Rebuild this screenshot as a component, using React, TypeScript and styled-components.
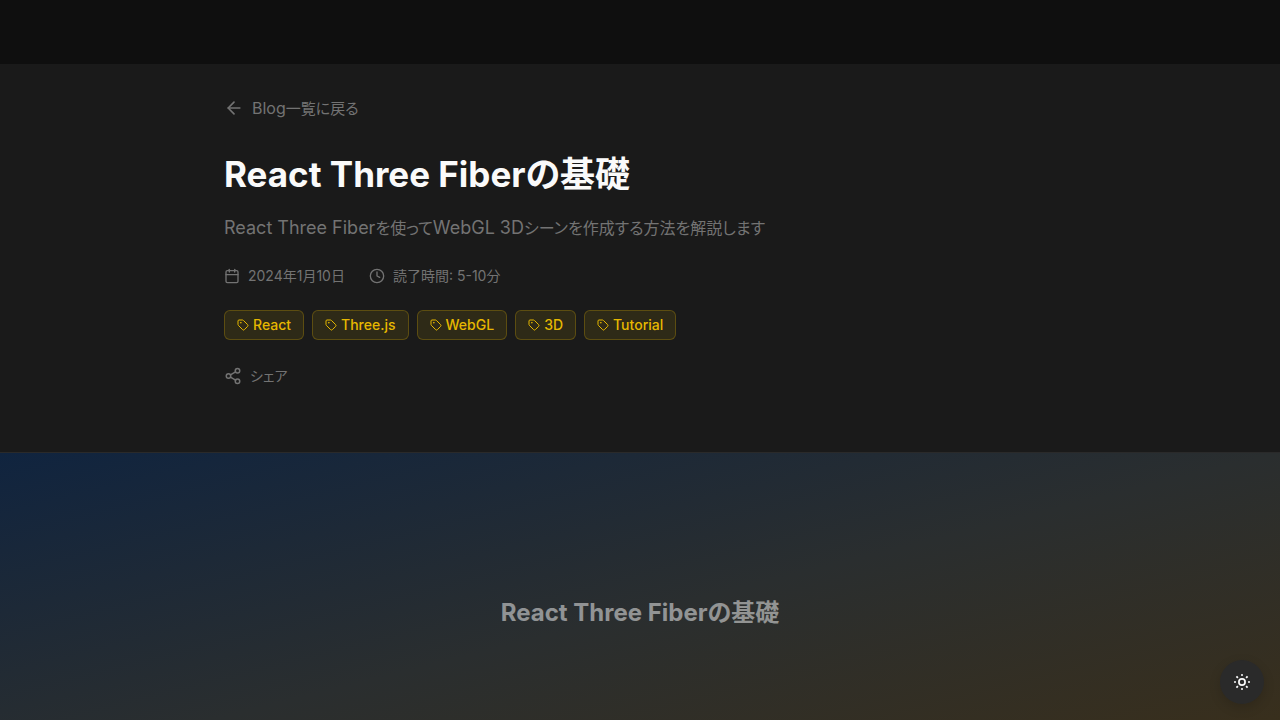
import React from 'react';
import styled, { createGlobalStyle } from 'styled-components';
import { ArrowLeft, Calendar, Clock, Share2, Tag } from 'lucide-react';

const GlobalStyle = createGlobalStyle`
  *, *::before, *::after { box-sizing: border-box; }
  body {
    margin: 0;
    background: #0f0f0f;
    color: #fafafa;
    font-family: Inter, "Noto Sans CJK JP", sans-serif;
    font-size: 16px;
    line-height: 24px;
    font-feature-settings: "palt";
  }
  h1, p, ul { margin: 0; padding: 0; }
  button { font: inherit; font-feature-settings: inherit; border: 0; padding: 0; cursor: pointer; }
`;

const Page = styled.div`
  padding-top: 64px;
`;

const ArticleHeader = styled.header`
  background: #1a1a1a;
  border-bottom: 1px solid #2a2a2a;
`;

const Container = styled.div`
  max-width: 896px;
  margin: 0 auto;
  padding: 32px 32px 64px;
  display: flex;
  flex-direction: column;
  align-items: flex-start;
`;

const BackLink = styled.a`
  display: inline-flex;
  align-items: center;
  gap: 8px;
  margin-bottom: 32px;
  color: #737373;
  text-decoration: none;
`;

const Japanese = styled.span<{ $size: number }>`
  font-size: ${({ $size }) => $size}px;
  line-height: 1;
`;

const Title = styled.h1`
  margin-bottom: 16px;
  font-size: 35px;
  line-height: 45px;
  font-weight: 700;
`;

const Description = styled.p`
  margin-bottom: 24px;
  color: #737373;
  font-size: 18px;
  line-height: 29px;
`;

const MetaRow = styled.div`
  display: flex;
  flex-wrap: wrap;
  gap: 24px;
  margin-bottom: 24px;
  color: #737373;
  font-size: 14px;
  line-height: 20px;
`;

const MetaItem = styled.span`
  display: flex;
  align-items: center;
  gap: 8px;
`;

const TagList = styled.ul`
  display: flex;
  flex-wrap: wrap;
  gap: 8px;
  margin-bottom: 24px;
  list-style: none;
`;

const TagChip = styled.li`
  display: flex;
  align-items: center;
  gap: 4px;
  padding: 4px 12px;
  border: 1px solid rgba(230, 184, 0, 0.25);
  border-radius: 6px;
  background: rgba(230, 184, 0, 0.1);
  color: #e6b800;
  font-size: 14px;
  line-height: 20px;
  font-weight: 500;
`;

const ShareButton = styled.button`
  display: flex;
  align-items: center;
  gap: 8px;
  height: 24px;
  background: none;
  color: #737373;
`;

const Hero = styled.div`
  display: flex;
  align-items: center;
  justify-content: center;
  height: 320px;
  background: linear-gradient(to bottom right, #10243f, #2a2e2f, #3b2f19);
`;

const HeroText = styled.span`
  color: rgba(250, 250, 250, 0.5);
  font-size: 24px;
  line-height: 32px;
  font-weight: 700;
`;

const ThemeButton = styled.button`
  position: fixed;
  right: 16px;
  bottom: 16px;
  width: 44px;
  height: 44px;
  display: flex;
  align-items: center;
  justify-content: center;
  border-radius: 50%;
  background: #2a2a2a;
  color: #fafafa;
  box-shadow: 0 4px 12px rgba(0, 0, 0, 0.15);
`;

const tags = ['React', 'Three.js', 'WebGL', '3D', 'Tutorial'];

function SunIcon() {
  return (
    <svg width="18" height="18" viewBox="0 0 18 18" fill="none" stroke="currentColor" aria-hidden="true">
      <circle cx="9" cy="9" r="3.1" strokeWidth="1.7" />
      <path d="M9 1v2M9 15v2M1 9h2M15 9h2" strokeWidth="1.5" />
      <path d="M3.4 3.4l1.5 1.5M13.1 13.1l1.5 1.5M3.4 14.6l1.5-1.5M13.1 4.9l1.5-1.5" strokeWidth="1.8" />
    </svg>
  );
}

export default function App() {
  return (
    <Page lang="ja">
      <GlobalStyle />
      <main>
        <ArticleHeader>
          <Container>
            <BackLink href="#blog">
              <ArrowLeft size={20} />
              <span>
                Blog<Japanese $size={15}>一覧に戻る</Japanese>
              </span>
            </BackLink>
            <Title>React Three Fiberの基礎</Title>
            <Description>
              React Three Fiber<Japanese $size={16}>を使って</Japanese>WebGL 3D
              <Japanese $size={16}>シーンを作成する方法を解説します</Japanese>
            </Description>
            <MetaRow>
              <MetaItem>
                <Calendar size={16} />
                <time dateTime="2024-01-10">2024年1月10日</time>
              </MetaItem>
              <MetaItem>
                <Clock size={16} />
                読了時間: 5-10分
              </MetaItem>
            </MetaRow>
            <TagList>
              {tags.map((tag) => (
                <TagChip key={tag}>
                  <Tag size={12} />
                  {tag}
                </TagChip>
              ))}
            </TagList>
            <ShareButton type="button">
              <Share2 size={18} />
              <Japanese $size={14}>シェア</Japanese>
            </ShareButton>
          </Container>
        </ArticleHeader>
        <Hero>
          <HeroText>React Three Fiberの基礎</HeroText>
        </Hero>
      </main>
      <ThemeButton type="button" aria-label="テーマを切り替える">
        <SunIcon />
      </ThemeButton>
    </Page>
  );
}
